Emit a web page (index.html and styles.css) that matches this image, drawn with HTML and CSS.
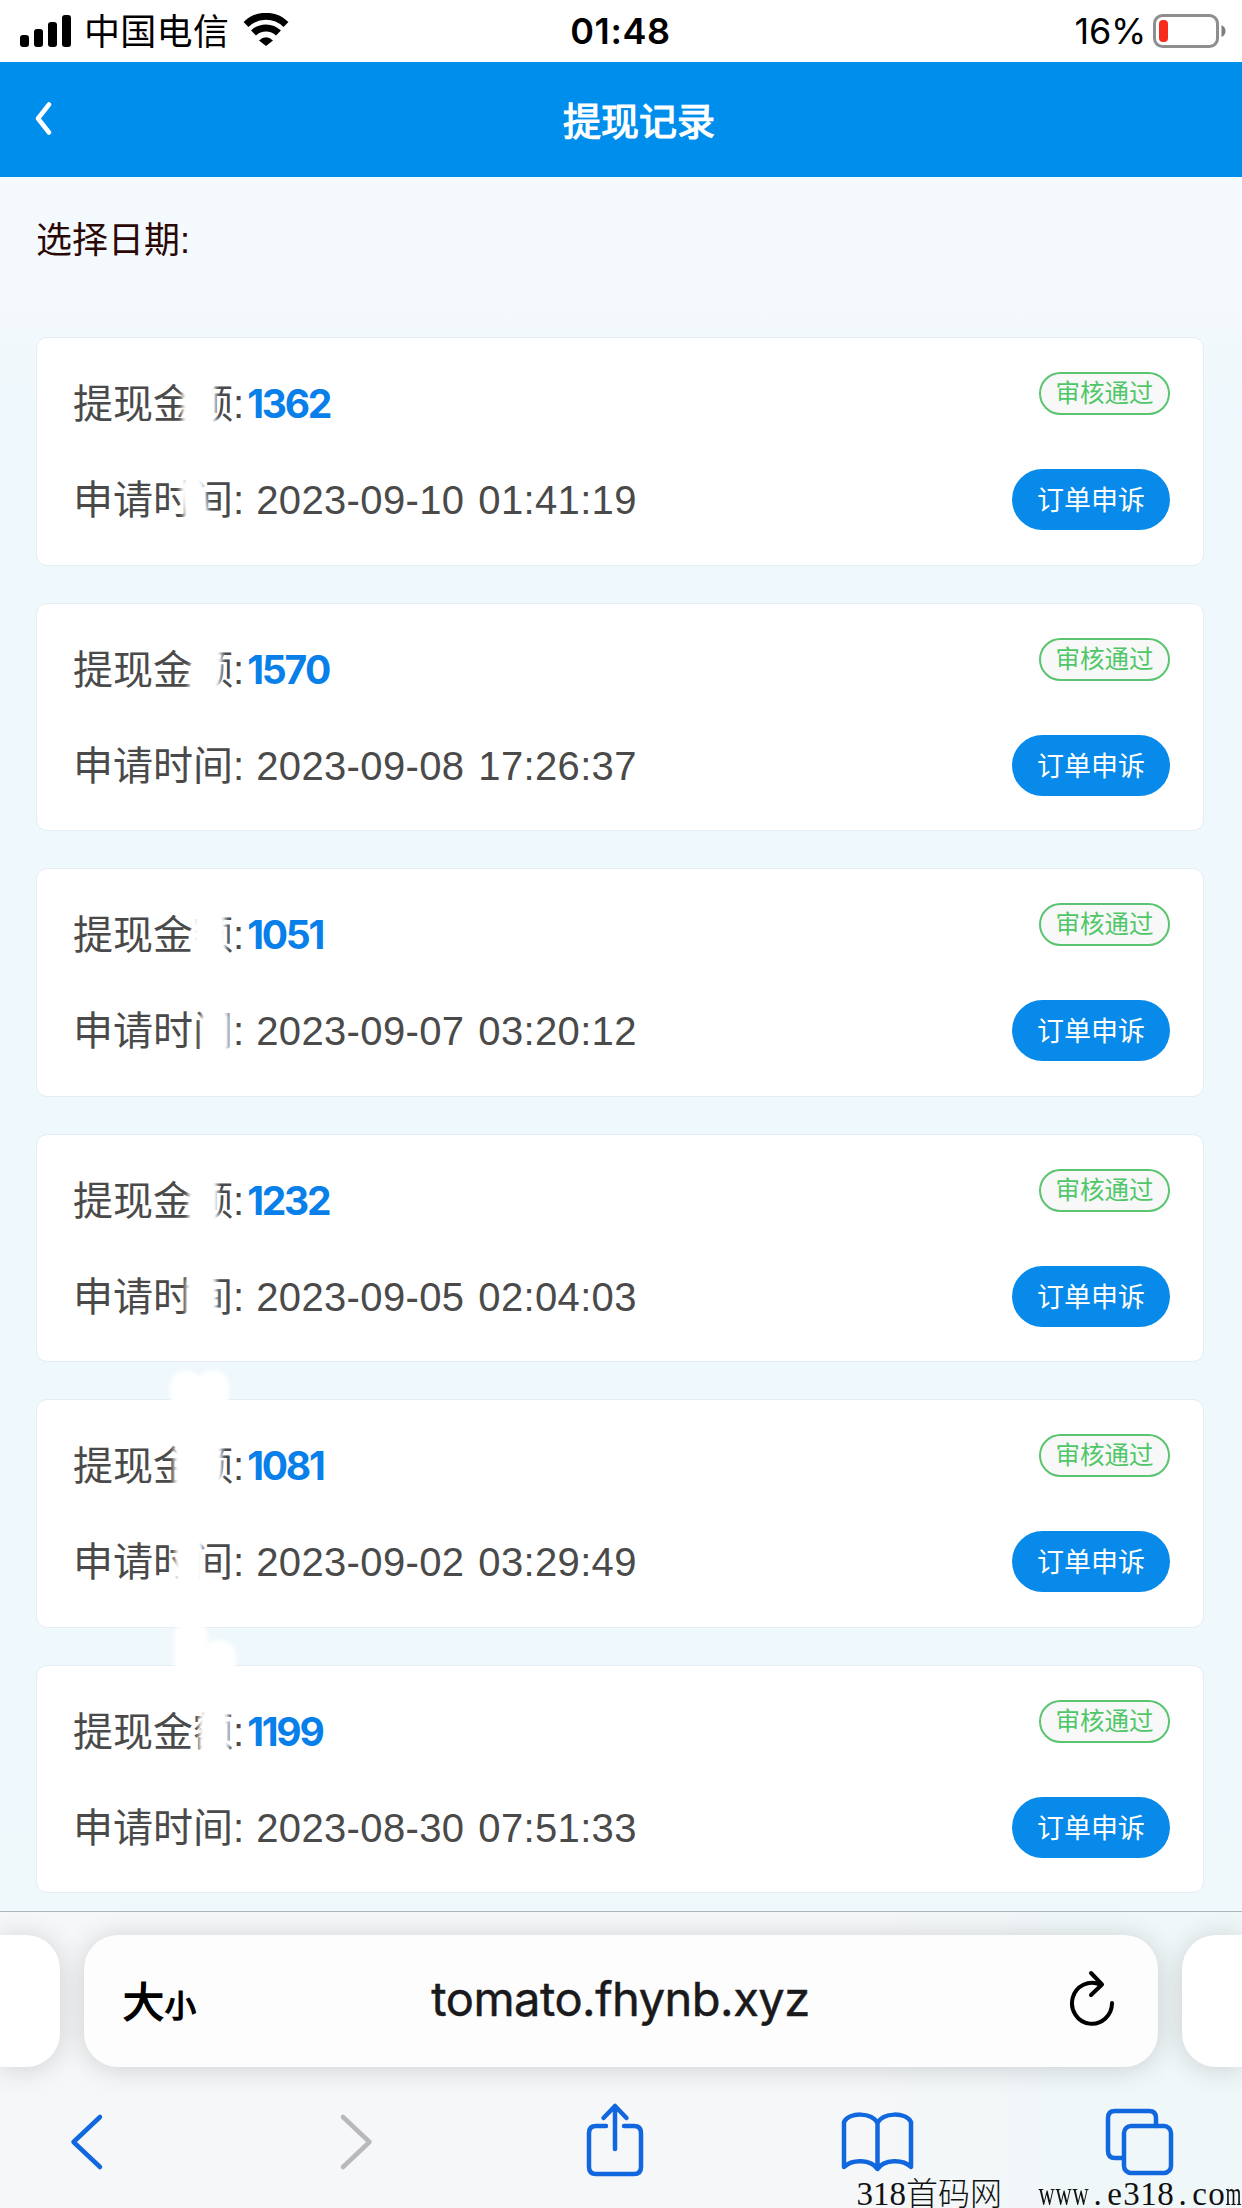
FILE: index.html
```
<!DOCTYPE html>
<html lang="zh-CN">

<head>
    <meta charset="UTF-8">
    <meta name="viewport" content="width=device-width, initial-scale=1.0">
    <title>提现记录</title>
    <link rel="stylesheet" href="styles.css">
</head>

<body>
    <div class="status">
        <div class="status-left">
            <svg class="signal" width="51" height="32" viewBox="0 0 51 32">
                <rect x="0" y="20" width="9" height="12" rx="3" />
                <rect x="14" y="14" width="9" height="18" rx="3" />
                <rect x="28" y="7" width="9" height="25" rx="3" />
                <rect x="42" y="0" width="9" height="32" rx="3" />
            </svg>
            <span class="carrier">中国电信</span>
            <svg class="wifi" width="46" height="33" viewBox="0 0 46 33">
                <path d="M3 11.5a28.5 28.5 0 0 1 40 0" />
                <path d="M10.5 20a18 18 0 0 1 25 0" />
                <path class="dot" d="M16 27.5q7-6.5 14 0L23 33z" />
            </svg>
        </div>
        <div class="clock">01:48</div>
        <div class="status-right">
            <span class="percent">16%</span>
            <svg width="74" height="34" viewBox="0 0 74 34">
                <rect x="1.5" y="1.5" width="63" height="31" rx="8" fill="none" stroke="#8e8e8e" stroke-width="3" />
                <rect x="6" y="6" width="9" height="22" rx="4" fill="#f92b1c" />
                <path d="M68.5 11q4 2 4 6t-4 6z" fill="#7d7d7d" />
            </svg>
        </div>
    </div>

    <div class="header">
        <svg class="back" width="17" height="33" viewBox="0 0 17 33">
            <path d="M14 2.5L3 16.5l11 14" />
        </svg>
        <h1>提现记录</h1>
    </div>

    <div class="main">
        <div class="date">选择日期:</div>
        <ul class="list">
            <li>
                <div class="row">
                    <p>提现金额:<b>1362</b></p>
                    <span class="pass">审核通过</span>
                </div>
                <div class="row">
                    <p>申请时间: <em>2023-09-10 01:41:19</em></p>
                    <a class="btn">订单申诉</a>
                </div>
                <i class="wipe a1"></i>
                <i class="wipe t1"></i>
            </li>
            <li>
                <div class="row">
                    <p>提现金额:<b>1570</b></p>
                    <span class="pass">审核通过</span>
                </div>
                <div class="row">
                    <p>申请时间: <em>2023-09-08 17:26:37</em></p>
                    <a class="btn">订单申诉</a>
                </div>
                <i class="wipe a2"></i>
            </li>
            <li>
                <div class="row">
                    <p>提现金额:<b>1051</b></p>
                    <span class="pass">审核通过</span>
                </div>
                <div class="row">
                    <p>申请时间: <em>2023-09-07 03:20:12</em></p>
                    <a class="btn">订单申诉</a>
                </div>
                <i class="wipe a3"></i>
                <i class="wipe t3"></i>
            </li>
            <li>
                <div class="row">
                    <p>提现金额:<b>1232</b></p>
                    <span class="pass">审核通过</span>
                </div>
                <div class="row">
                    <p>申请时间: <em>2023-09-05 02:04:03</em></p>
                    <a class="btn">订单申诉</a>
                </div>
                <i class="wipe a4"></i>
                <i class="wipe t4"></i>
            </li>
            <li>
                <div class="row">
                    <p>提现金额:<b>1081</b></p>
                    <span class="pass">审核通过</span>
                </div>
                <div class="row">
                    <p>申请时间: <em>2023-09-02 03:29:49</em></p>
                    <a class="btn">订单申诉</a>
                </div>
                <i class="wipe g1"></i>
                <i class="wipe g2"></i>
                <i class="wipe a5"></i>
                <i class="wipe t5"></i>
            </li>
            <li>
                <div class="row">
                    <p>提现金额:<b>1199</b></p>
                    <span class="pass">审核通过</span>
                </div>
                <div class="row">
                    <p>申请时间: <em>2023-08-30 07:51:33</em></p>
                    <a class="btn">订单申诉</a>
                </div>
                <i class="wipe g3"></i>
                <i class="wipe g4"></i>
                <i class="wipe a6"></i>
            </li>
        </ul>
    </div>

    <div class="browser">
        <div class="tabs">
            <div class="tab prev"></div>
            <div class="tab address">
                <span class="size">大<small>小</small></span>
                <span class="url">tomato.fhynb.xyz</span>
                <svg class="reload" width="46" height="56" viewBox="0 0 46 56">
                    <path d="M31 14.5A20 20.5 0 1 0 43 33" />
                    <path d="M22 3l11 11.5L22 25" />
                </svg>
            </div>
            <div class="tab next"></div>
        </div>
        <div class="tools">
            <svg width="1242" height="90" viewBox="0 2090 1242 90">
                <path d="M100 2117L73.5 2142L100 2167" />
                <path class="off" d="M343 2117L369.5 2142L343 2167" />
                <path d="M606 2126h-10q-7 0-7 7v34q0 7 7 7h38q7 0 7-7v-34q0-7-7-7h-10" />
                <path d="M615 2149v-43M603.5 2118l11.5-12l11.5 12" />
                <path d="M877.5 2169v-46c-6-11-28-11-33.5-1v45c8-8 27-8 33.5 2c6.5-10 25.5-10 33.5-2v-45c-5.5-10-27.5-10-33.5 1" />
                <path d="M1122 2158h-7q-7 0-7-7v-33q0-7 7-7h34q7 0 7 7v8" />
                <rect x="1124" y="2126" width="47" height="47" rx="7" />
            </svg>
        </div>
        <div class="mark">
            <span>318</span><span class="cn">首码网</span>
            <span class="site"><s class="w">w</s><s class="w">w</s><s class="w">w</s><s>.</s><s>e</s><s>3</s><s>1</s><s>8</s><s>.</s><s>c</s><s>o</s><s class="m">m</s></span>
        </div>
    </div>
</body>

</html>
```
FILE: styles.css
```
* {
    margin: 0;
    padding: 0;
    box-sizing: border-box;
}

body {
    width: 1242px;
    height: 2208px;
    overflow: hidden;
    display: flex;
    flex-direction: column;
    background: #fff;
    font-family: "Liberation Sans", "Noto Sans CJK SC", sans-serif;
}

ul {
    list-style: none;
}

svg {
    display: block;
}

em,
s {
    font-style: normal;
    text-decoration: none;
}

/* status bar */
.status {
    height: 62px;
    padding: 0 15px 0 20px;
    display: grid;
    grid-template-columns: 1fr 100px 1fr;
    align-items: center;
    color: #000;
    font-size: 36px;
}

.status-left,
.status-right {
    display: flex;
    align-items: center;
}

.status-right {
    justify-content: flex-end;
}

.signal {
    margin-right: 13px;
}

.carrier {
    width: 159px;
    line-height: 54px;
    padding-top: 3px;
    letter-spacing: .3px;
}

.wifi {
    margin-top: -3px;
}

.wifi path {
    fill: none;
    stroke: #000;
    stroke-width: 7;
}

.wifi .dot {
    fill: #000;
    stroke: none;
}

.clock {
    margin-left: -6px;
    font-family: Inter, sans-serif;
    font-weight: 600;
    letter-spacing: .6px;
    white-space: nowrap;
    text-align: center;
}

.percent {
    margin-right: 7px;
    font-family: Inter, sans-serif;
    letter-spacing: -.3px;
}

/* page header */
.header {
    height: 115px;
    padding-left: 35px;
    display: flex;
    align-items: center;
    background: #008eec;
}

.back {
    margin-top: -3px;
    fill: none;
    stroke: #fff;
    stroke-width: 4.5;
    stroke-linecap: round;
    stroke-linejoin: round;
}

h1 {
    width: 1172px;
    margin-left: 1px;
    padding-top: 4px;
    text-align: center;
    font-size: 38px;
    font-weight: 400;
    line-height: 56px;
    color: #fff;
    -webkit-text-stroke: 1.2px #fff;
}

.main {
    height: 1734px;
    padding: 0 38px 0 36px;
    background: linear-gradient(#f5fafe 0, #f4f9fd 120px, #eff8fc 230px, #eff8fb 100%);
}

.date {
    height: 160px;
    padding-top: 37px;
    font-size: 36px;
    line-height: 54px;
    color: #2a0805;
}

.list li {
    position: relative;
    height: 228.5px;
    margin-bottom: 37px;
    padding: 34px 33px 0 36px;
    background: #fff;
    border: 1px solid #e3edf3;
    border-radius: 11px;
}

.row {
    height: 97px;
    display: flex;
    justify-content: space-between;
    align-items: flex-start;
}

.row p {
    font-size: 40px;
    line-height: 64px;
    color: #4a4a4a;
    white-space: nowrap;
}

.row + .row p {
    line-height: 62px;
}

.row b {
    margin-left: 3px;
    font-family: Inter, sans-serif;
    font-size: 39px;
    font-weight: 700;
    font-kerning: none;
    letter-spacing: -2.2px;
    color: #087fe9;
}

.row em {
    margin-left: 1px;
    letter-spacing: .35px;
    word-spacing: 2.5px;
}

.pass {
    width: 131px;
    height: 43px;
    border: 2px solid #5bc470;
    border-radius: 22px;
    background: #f8f8f8;
    font-size: 24.5px;
    line-height: 40px;
    text-align: center;
    color: #4fc768;
}

.btn {
    width: 158px;
    height: 61px;
    border-radius: 31px;
    background: #078aea;
    font-size: 27px;
    line-height: 64px;
    text-align: center;
    color: #fff;
}

/* white brush strokes over the text */
.wipe {
    position: absolute;
    background: #fff;
    border-radius: 10px;
    filter: blur(2px);
}

.a1 { left: 145px; top: 42px; width: 34px; height: 50px; }
.t1 { left: 145px; top: 138px; width: 25px; height: 52px; transform: rotate(-8deg); }
.a2 { left: 153px; top: 42px; width: 31px; height: 50px; transform: rotate(6deg); }
.a3 { left: 156px; top: 42px; width: 33px; height: 50px; }
.t3 { left: 164px; top: 138px; width: 28px; height: 52px; }
.a4 { left: 151px; top: 42px; width: 30px; height: 50px; }
.t4 { left: 149px; top: 138px; width: 31px; height: 52px; }
.g1 { left: 133px; top: -30px; width: 32px; height: 42px; border-radius: 16px; }
.g2 { left: 159px; top: -30px; width: 33px; height: 42px; border-radius: 16px; }
.a5 { left: 137px; top: 36px; width: 48px; height: 60px; }
.t5 { left: 138px; top: 132px; width: 28px; height: 58px; }
.g3 { left: 137px; top: -42px; width: 34px; height: 54px; }
.g4 { left: 165px; top: -26px; width: 34px; height: 38px; border-radius: 16px; }
.a6 { left: 162px; top: 42px; width: 30px; height: 50px; }

/* browser bars */
.browser {
    position: relative;
    height: 297px;
    border-top: 1px solid #b0b5bd;
    background: linear-gradient(90deg, #f6f7f8, #f6f7f8 68%, #f0f7f9 86%, #f0f7f9);
}

.tabs {
    display: flex;
    gap: 24px;
    padding-top: 23px;
}

.tab {
    width: 60px;
    height: 132px;
    background: #fff;
    box-shadow: 0 2px 28px rgba(0, 0, 0, .16);
}

.prev {
    border-radius: 0 34px 34px 0;
}

.next {
    border-radius: 34px 0 0 34px;
}

.address {
    width: 1074px;
    padding: 0 43px 0 39px;
    display: grid;
    grid-template-columns: 90px 1fr 90px;
    align-items: center;
    border-radius: 34px;
    background: #fdfdfe;
}

.size {
    font-size: 41px;
    font-weight: 400;
    line-height: 60px;
    color: #000;
    padding-top: 8px;
    white-space: nowrap;
    -webkit-text-stroke: 1.6px #000;
}

.size small {
    margin-left: 1px;
    font-size: 31px;
}

.url {
    font-family: Inter, sans-serif;
    font-size: 47px;
    letter-spacing: -.5px;
    line-height: 60px;
    text-align: center;
    color: #1a1a1c;
    margin-top: -4px;
    padding-left: 3px;
    -webkit-text-stroke: .5px #1a1a1c;
}

.reload {
    justify-self: end;
    margin-top: -6px;
    fill: none;
    stroke: #000;
    stroke-width: 4;
    stroke-linecap: round;
    stroke-linejoin: round;
}

.tools {
    margin-top: 23px;
}

.tools svg {
    fill: none;
    stroke: #1167de;
    stroke-width: 4.5;
    stroke-linejoin: round;
}

.tools path {
    stroke-linecap: round;
}

.tools .off {
    stroke: #b9b9bb;
}

.mark {
    position: absolute;
    right: 0;
    bottom: 0;
    display: flex;
    font-family: "Liberation Serif", "Noto Sans CJK SC", serif;
    font-size: 33px;
    line-height: 28px;
    color: #111;
}

.mark .cn {
    font-size: 32px;
    font-weight: 300;
    margin-right: 36px;
}

.site {
    display: flex;
}

.site s {
    width: 17px;
    display: flex;
    justify-content: center;
}

.site .w {
    transform: scaleX(.68);
}

.site .m {
    transform: scaleX(.62);
}
```
